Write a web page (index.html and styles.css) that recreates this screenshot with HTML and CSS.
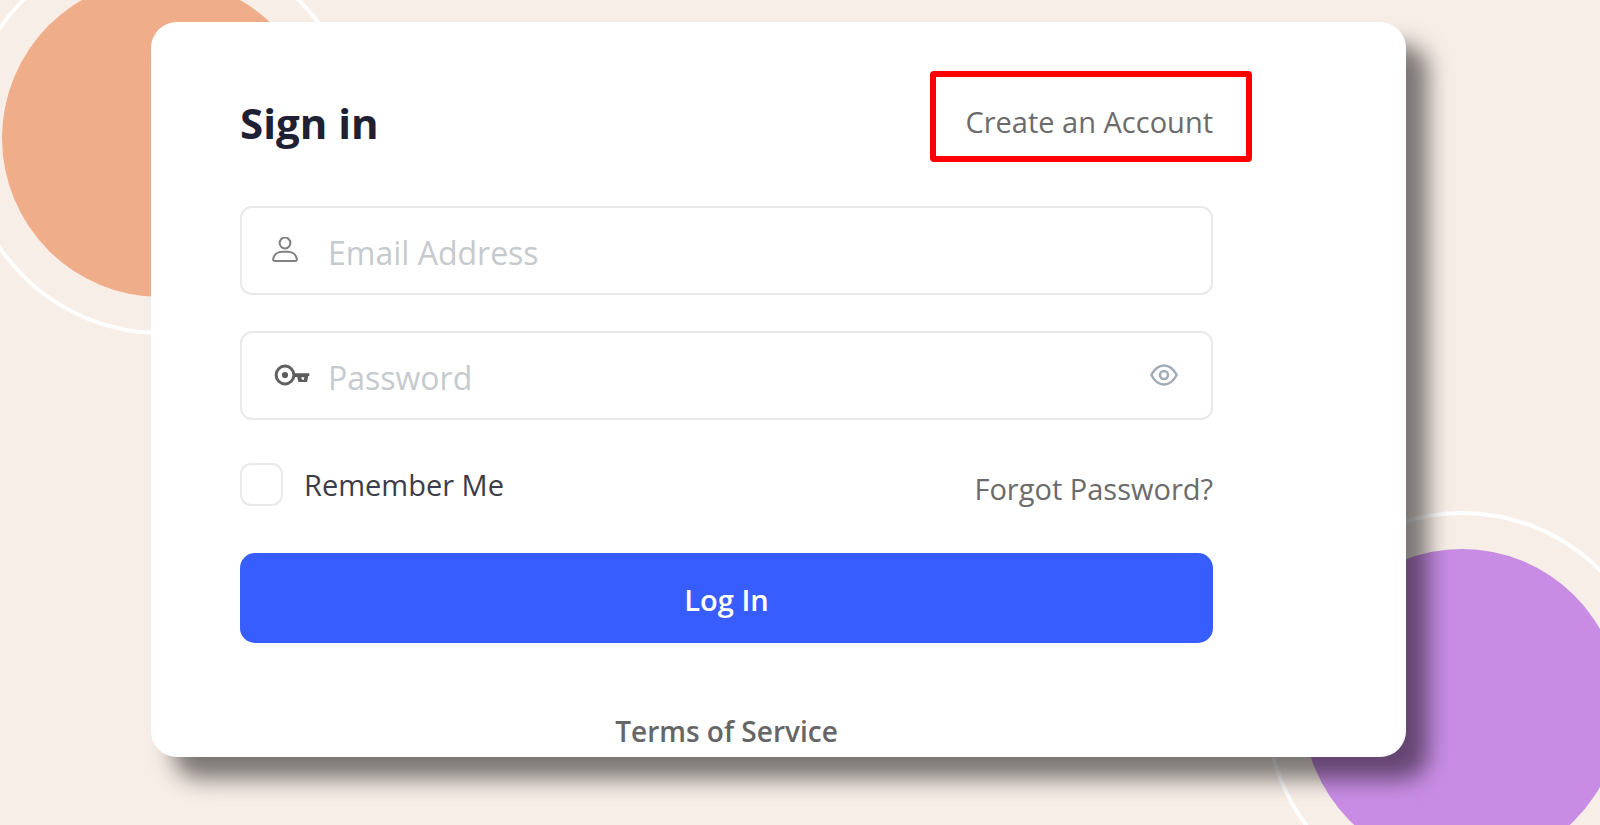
FILE: index.html
```html
<!DOCTYPE html>
<html lang="en">
<head>
<meta charset="utf-8">
<meta name="viewport" content="width=device-width, initial-scale=1">
<title>Sign in</title>
<link rel="stylesheet" href="styles.css">
</head>
<body>
<div class="page">
  <div class="disc disc-orange"></div>
  <div class="disc disc-purple"></div>
  <main class="card">
    <form class="form">
      <header class="form-header">
        <h1 class="title">Sign in</h1>
        <a class="create-link" href="#create">Create an Account</a>
      </header>
      <div class="field field-email">
        <svg class="icon icon-user" viewBox="0 0 26 26" aria-hidden="true">
          <circle cx="13" cy="6" r="5.4"/>
          <path d="M3 24H23Q25.200 24 24.800 21.700C23.800 16.900 19.500 14.700 15.500 14.700H10.500C6.500 14.700 2.200 16.900 1.200 21.700Q.8 24 3 24Z"/>
        </svg>
        <input class="input" type="email" placeholder="Email Address" aria-label="Email Address">
      </div>
      <div class="field field-password">
        <svg class="icon icon-key" viewBox="0 0 36 22" aria-hidden="true">
          <circle class="key-ring" cx="11" cy="11" r="8.9"/>
          <circle class="key-fill" cx="11" cy="11" r="3.1"/>
          <path class="key-fill" d="M20 9.300H35.300V12H34.300L33 18H24.500L23.200 13H20ZM27.300 13.300L28 15.800H29.800L30.400 13.300Z"/>
        </svg>
        <input class="input" type="password" placeholder="Password" aria-label="Password">
        <button class="reveal" type="button" aria-label="Show password">
          <svg class="icon-eye" viewBox="0 0 28 22" aria-hidden="true">
            <path d="M1.300 11C4.500 5 9 1.500 14 1.500S23.500 5 26.700 11C23.500 17 19 20.500 14 20.500S4.500 17 1.300 11Z"/>
            <circle cx="14" cy="11" r="4"/>
          </svg>
        </button>
      </div>
      <div class="options">
        <label class="remember"><input class="checkbox" type="checkbox">Remember Me</label>
        <a class="forgot-link" href="#forgot">Forgot Password?</a>
      </div>
      <button class="submit" type="submit">Log In</button>
      <a class="terms-link" href="#terms">Terms of Service</a>
    </form>
  </main>
</div>
</body>
</html>
```
FILE: styles.css
```css
* { box-sizing: border-box; }

body {
  margin: 0;
  font-family: "Open Sans", "Noto Sans", sans-serif;
  font-size: 29px;
  line-height: 40px;
  color: #3c3c4a;
}

.page {
  position: relative;
  min-height: 100vh;
  padding: 22px 194px 68px 151px;
  overflow: hidden;
  background: #f8eee8;
}

.disc {
  position: absolute;
  width: 394px;
  height: 394px;
  padding: 34px;
  border: 4px solid #fff;
  border-radius: 50%;
}
.disc::before {
  content: "";
  display: block;
  height: 100%;
  border-radius: 50%;
}
.disc-orange { top: -59px; left: -36px; }
.disc-orange::before { background: #efad8a; }
.disc-purple { top: 511px; right: -59px; }
.disc-purple::before { background: #c88ce4; }

.card {
  position: relative;
  padding: 49px 193px 0 89px;
  border-radius: 26px;
  background: #fff;
  box-shadow: 22px 22px 22px rgba(0, 0, 0, .5);
}

.form { display: flex; flex-direction: column; }

a { color: #6b6b6b; text-decoration: none; }

.form-header {
  display: flex;
  align-items: center;
  justify-content: space-between;
  height: 91px;
  margin-bottom: 44px;
}
.title {
  margin: 0;
  padding-top: 12px;
  font-size: 42px;
  line-height: 56px;
  font-weight: 700;
  color: #1e2033;
}
.create-link {
  position: relative;
  padding: 31px 0 20px;
}
.create-link::after {
  content: "";
  position: absolute;
  inset: 0 -39px 0 -35px;
  border: 6px solid #f00;
  border-radius: 4px;
}

.field {
  display: flex;
  align-items: center;
  height: 89px;
  padding: 0 33px 2px 30px;
  border: 2px solid #e7e9eb;
  border-radius: 12px;
}
.field-email { margin-bottom: 36px; }
.field-password { margin-bottom: 43px; }

.icon { flex: none; fill: none; }
.icon-user { width: 26px; height: 26px; margin-right: 30px; stroke: #808080; stroke-width: 2; }
.icon-key { width: 36px; height: 22px; margin: 0 18px 0 2px; }
.key-ring { stroke: #606060; stroke-width: 3; }
.key-fill { fill: #5c5c5c; fill-rule: evenodd; }

.input {
  flex: 1;
  min-width: 0;
  padding: 6px 0 0;
  border: 0;
  outline: 0;
  background: none;
  font: inherit;
  font-size: 32px;
  color: #3c3c4a;
}
.input::placeholder { color: #c6cacd; opacity: 1; }

.reveal {
  display: flex;
  padding: 0;
  border: 0;
  background: none;
}
.icon-eye { width: 28px; height: 22px; fill: none; stroke: #a2acb6; stroke-width: 2.5; }

.options {
  display: flex;
  justify-content: space-between;
  height: 43px;
  margin-bottom: 47px;
}
.remember { display: flex; align-items: center; gap: 21px; }
.checkbox {
  appearance: none;
  width: 43px;
  height: 43px;
  margin: 0;
  border: 2px solid #e7e9eb;
  border-radius: 11px;
}
.forgot-link { padding-top: 6px; }

.submit {
  height: 90px;
  padding: 4px 0 0;
  margin-bottom: 68px;
  border: 0;
  border-radius: 15px;
  background: #385dff;
  font: inherit;
  font-weight: 600;
  color: #fff;
}

.terms-link {
  align-self: center;
  padding-bottom: 6px;
  font-size: 28px;
  font-weight: 600;
  color: #666;
}
```
